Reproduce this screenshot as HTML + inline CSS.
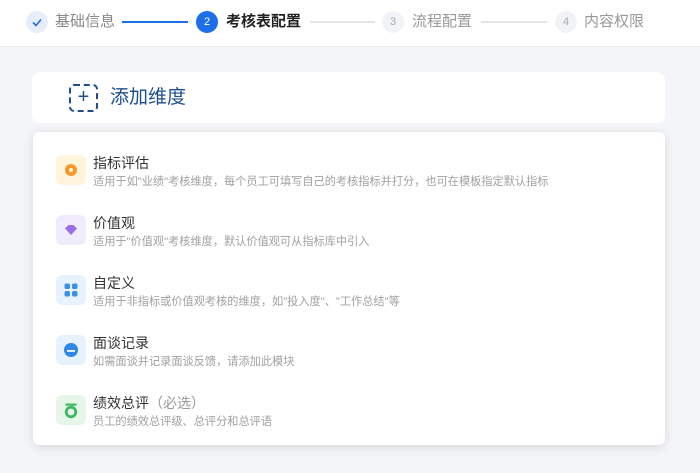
<!DOCTYPE html>
<html><head><meta charset="utf-8"><style>
*{margin:0;padding:0;box-sizing:border-box}
body{width:700px;height:473px;background:#f3f5f8;font-family:"Liberation Sans","Noto Sans CJK SC",sans-serif;position:relative;overflow:hidden}
.hd{position:absolute;left:0;top:0;width:700px;height:47px;background:#fff;border-bottom:1px solid #e8ebf0}
.c{position:absolute;top:11px;width:22px;height:22px;border-radius:50%;font-size:11px;line-height:22px;text-align:center}
.t{position:absolute;top:12px;font-size:15px;line-height:20px}
.l{position:absolute;top:21px;height:2px}
.add{position:absolute;left:32px;top:72px;width:633px;height:51px;background:#fff;border-radius:8px}
.plus{position:absolute;left:37px;top:12px;width:29px;height:28px;border:2px dashed #1d4d8f;border-radius:5px;color:#1d4d8f;font-size:20px;line-height:23px;text-align:center}
.addt{position:absolute;left:78px;top:14px;font-size:19px;color:#1d4d8f;line-height:24px}
.menu{position:absolute;left:33px;top:132px;width:632px;height:313px;background:#fff;border-radius:6px;box-shadow:0 2px 10px rgba(0,0,0,.12)}
.it{position:absolute;left:23px;width:600px;height:40px}
.ic{position:absolute;left:0;top:0;width:30px;height:30px;border-radius:6px}
.tt{position:absolute;left:37px;top:-1px;font-size:14px;color:#333;line-height:18px}
.ds{position:absolute;left:37px;top:19px;font-size:11.2px;color:#a0a0a0;line-height:16px;white-space:nowrap}
</style></head><body>
<div class="hd">
<div class="c" style="left:26px;background:#e6eefc;color:#1c6fe8"><svg width="22" height="22"><path d="M7 11.5l3 3 5-6" fill="none" stroke="#1c6fe8" stroke-width="1.6"/></svg></div>
<div class="t" style="left:55px;color:#888">基础信息</div>
<div class="l" style="left:122px;width:66px;background:#1c6fe8"></div>
<div class="c" style="left:196px;background:#1c6fe8;color:#fff">2</div>
<div class="t" style="left:226px;color:#222;font-weight:bold">考核表配置</div>
<div class="l" style="left:310px;width:65px;background:#e3e5e8"></div>
<div class="c" style="left:382px;background:#f1f3f6;color:#aaa">3</div>
<div class="t" style="left:412px;color:#999">流程配置</div>
<div class="l" style="left:481px;width:66px;background:#e3e5e8"></div>
<div class="c" style="left:555px;background:#f1f3f6;color:#aaa">4</div>
<div class="t" style="left:584px;color:#999">内容权限</div>
</div>
<div class="add"><div class="plus">+</div><div class="addt">添加维度</div></div>
<div class="menu">
<div class="it" style="top:23px"><div class="ic" style="background:#fff4dc"><svg width="30" height="30"><circle cx="15" cy="15" r="6" fill="#f59a2a"/><circle cx="15" cy="15" r="2" fill="#fff4dc"/></svg></div><div class="tt">指标评估</div><div class="ds">适用于如"业绩"考核维度，每个员工可填写自己的考核指标并打分，也可在模板指定默认指标</div></div>
<div class="it" style="top:83px"><div class="ic" style="background:#f1ecfc"><svg width="30" height="30"><path d="M9 13.5l3.5-3.5h5l3.5 3.5-6 6.5z" fill="#9b6ee8"/></svg></div><div class="tt">价值观</div><div class="ds">适用于"价值观"考核维度，默认价值观可从指标库中引入</div></div>
<div class="it" style="top:143px"><div class="ic" style="background:#e8f2fd"><svg width="30" height="30" fill="#3c8fe8"><rect x="8.5" y="8.5" width="5.5" height="5.5" rx="1.8"/><rect x="16" y="8.5" width="5.5" height="5.5" rx="1.8"/><rect x="8.5" y="16" width="5.5" height="5.5" rx="1.8"/><rect x="16" y="16" width="5.5" height="5.5" rx="1.8"/></svg></div><div class="tt">自定义</div><div class="ds">适用于非指标或价值观考核的维度，如"投入度"、"工作总结"等</div></div>
<div class="it" style="top:203px"><div class="ic" style="background:#e8f2fd"><svg width="30" height="30"><circle cx="15" cy="15" r="7" fill="#2f86e6"/><rect x="11" y="15" width="8" height="1.8" fill="#fff"/></svg></div><div class="tt">面谈记录</div><div class="ds">如需面谈并记录面谈反馈，请添加此模块</div></div>
<div class="it" style="top:263px"><div class="ic" style="background:#e6f7ea"><svg width="30" height="30"><rect x="9.5" y="8.5" width="11" height="2.2" fill="#3fb860"/><circle cx="15" cy="17" r="4.8" fill="none" stroke="#3fb860" stroke-width="2.8"/></svg></div><div class="tt">绩效总评<span style="color:#999">（必选）</span></div><div class="ds">员工的绩效总评级、总评分和总评语</div></div>
</div>
</body></html>
